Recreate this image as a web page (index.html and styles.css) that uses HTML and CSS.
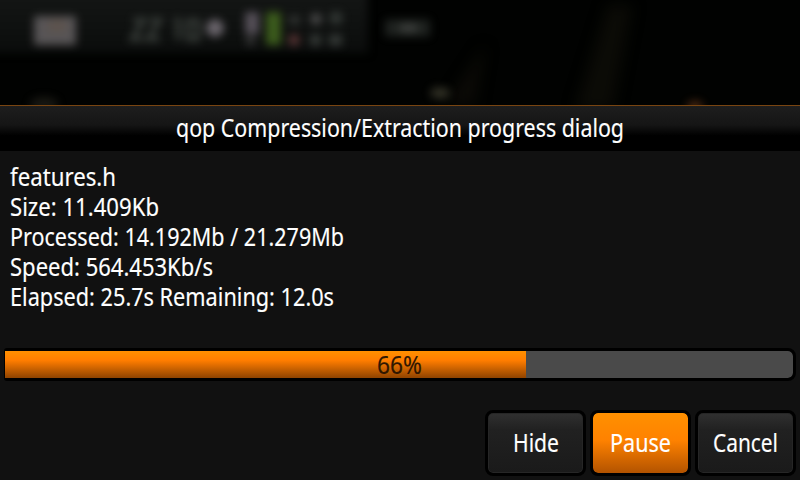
FILE: index.html
```html
<!DOCTYPE html>
<html lang="en">
<head>
<meta charset="utf-8">
<title>qop</title>
<link rel="stylesheet" href="styles.css">
</head>
<body>
<div class="screen">
  <svg class="backdrop" width="800" height="105" aria-hidden="true">
    <defs>
      <filter id="soft" x="-50%" y="-50%" width="200%" height="200%" color-interpolation-filters="sRGB"><feGaussianBlur stdDeviation="4"/></filter>
      <filter id="haze" x="-50%" y="-50%" width="200%" height="200%" color-interpolation-filters="sRGB"><feGaussianBlur stdDeviation="7"/></filter>
      <linearGradient id="bar" x1="0" y1="0" x2="0" y2="1"><stop offset="0" stop-color="#161817"/><stop offset="1" stop-color="#0b0d0c"/></linearGradient>
    </defs>
    <rect width="800" height="105" fill="#010201"/>
    <rect x="-20" y="-20" width="388" height="73" fill="url(#bar)" filter="url(#soft)"/>
    <g filter="url(#haze)">
      <path d="M632 5L612 110H575L608 5Z" fill="#0b0b06"/>
      <path d="M485 45L475 105H445Z" fill="#0b0a06"/>
    </g>
    <g filter="url(#soft)" opacity="0.85">
      <rect x="34" y="16" width="42" height="29" fill="#656163"/>
      <rect x="48" y="20" width="18" height="12" fill="#6b5f58"/>
      <g fill="none" stroke="#3f4440" stroke-width="5">
        <path d="M133 20H144L132 39H143M150 20H160L148 39H160M174 20H178V40M188 21H198V39H188Z"/>
      </g>
      <circle cx="215" cy="28" r="9" fill="#78727a"/>
      <rect x="245" y="12" width="14" height="22" fill="#625b65"/>
      <rect x="246" y="36" width="9" height="9" fill="#3b3b3b"/>
      <rect x="266" y="12" width="15" height="33" fill="#44691f"/>
      <circle cx="294" cy="40" r="6" fill="#633a3a"/>
      <path d="M289 20H300" stroke="#363936" stroke-width="9"/>
      <circle cx="316" cy="19" r="6" fill="#525252"/>
      <circle cx="336" cy="18" r="7" fill="#363b38"/>
      <path d="M310 40H321M329 40H342" stroke="#3c413e" stroke-width="11"/>
      <path d="M385 28H430" stroke="#242825" stroke-width="17"/>
      <path d="M400 28H417" stroke="#444744" stroke-width="9"/>
      <ellipse cx="440" cy="93" rx="10" ry="6" fill="#39382b"/>
      <ellipse cx="44" cy="104" rx="14" ry="7" fill="#1d1c16"/>
      <ellipse cx="695" cy="106" rx="8" ry="5" fill="#5a3016"/>
    </g>
  </svg>
  <header class="title">
    <svg class="line" width="448" height="45"><text x="0" y="31" textLength="448" lengthAdjust="spacingAndGlyphs">qop Compression/Extraction progress dialog</text></svg>
  </header>
  <main class="content">
    <div class="details">
      <svg class="line" width="780" height="30"><text x="0" y="24" textLength="106" lengthAdjust="spacingAndGlyphs">features.h</text></svg>
      <svg class="line" width="780" height="30"><text x="0" y="24" textLength="149" lengthAdjust="spacingAndGlyphs">Size: 11.409Kb</text></svg>
      <svg class="line" width="780" height="30"><text x="0" y="24" textLength="334" lengthAdjust="spacingAndGlyphs">Processed: 14.192Mb / 21.279Mb</text></svg>
      <svg class="line" width="780" height="30"><text x="0" y="24" textLength="203" lengthAdjust="spacingAndGlyphs">Speed: 564.453Kb/s</text></svg>
      <svg class="line" width="780" height="30"><text x="0" y="24" textLength="324" lengthAdjust="spacingAndGlyphs">Elapsed: 25.7s Remaining: 12.0s</text></svg>
    </div>
    <div class="progress" role="progressbar" aria-valuenow="66">
      <svg class="line percent" width="45" height="27"><text x="0" y="23" textLength="45" lengthAdjust="spacingAndGlyphs">66%</text></svg>
    </div>
    <div class="actions">
      <button class="button"><svg class="line" width="46" height="60"><text x="0" y="39" textLength="46" lengthAdjust="spacingAndGlyphs">Hide</text></svg></button>
      <button class="button primary"><svg class="line" width="62" height="60"><text x="0" y="39" textLength="61" lengthAdjust="spacingAndGlyphs">Pause</text></svg></button>
      <button class="button"><svg class="line" width="66" height="60"><text x="0" y="39" textLength="65" lengthAdjust="spacingAndGlyphs">Cancel</text></svg></button>
    </div>
  </main>
</div>
</body>
</html>
```
FILE: styles.css
```css
* { box-sizing: border-box; }
body { margin: 0; background: #111; }
.screen {
  display: flex;
  flex-direction: column;
  width: 800px;
  height: 480px;
  overflow: hidden;
}
.backdrop { display: block; flex: none; }
.line {
  display: block;
  overflow: visible;
  fill: #fff;
  stroke: #fff;
  stroke-width: 0.15px;
  font-family: "Noto Sans", "Open Sans", sans-serif;
  font-size: 24.5px;
}
.title {
  display: flex;
  justify-content: center;
  flex: none;
  height: 46px;
  border-top: 1px solid #794511;
  background: linear-gradient(#1e1e1e, #151515 42%, #000 66%);
}
.content {
  display: flex;
  flex-direction: column;
  flex: 1;
  background: #111;
}
.details { padding: 11px 10px 0; }
.progress {
  display: flex;
  justify-content: center;
  height: 33px;
  margin: 36px 4px 0;
  border: solid #000;
  border-width: 3px 3px 3px 1px;
  border-radius: 3px 8px 8px 3px;
  background: linear-gradient(#ff9000, #ff7d00 35%, #8f4300) 0 0 / 521px 100% no-repeat padding-box, #4a4a4a padding-box;
}
.percent { fill: #301700; stroke: #301700; }
.actions {
  display: flex;
  justify-content: flex-end;
  gap: 4px;
  padding: 29px 4px 0 0;
}
.button {
  display: flex;
  justify-content: center;
  width: 101px;
  height: 66px;
  padding: 0;
  border: 3px solid #000;
  border-radius: 8px;
  background: linear-gradient(#303030, #212121 28%, #1a1a1a) padding-box;
  box-shadow: inset 0 0 0 1px #262626;
}
.primary {
  background: linear-gradient(#ff9000, #ff8200 45%, #b35300) padding-box;
  box-shadow: none;
}
```
